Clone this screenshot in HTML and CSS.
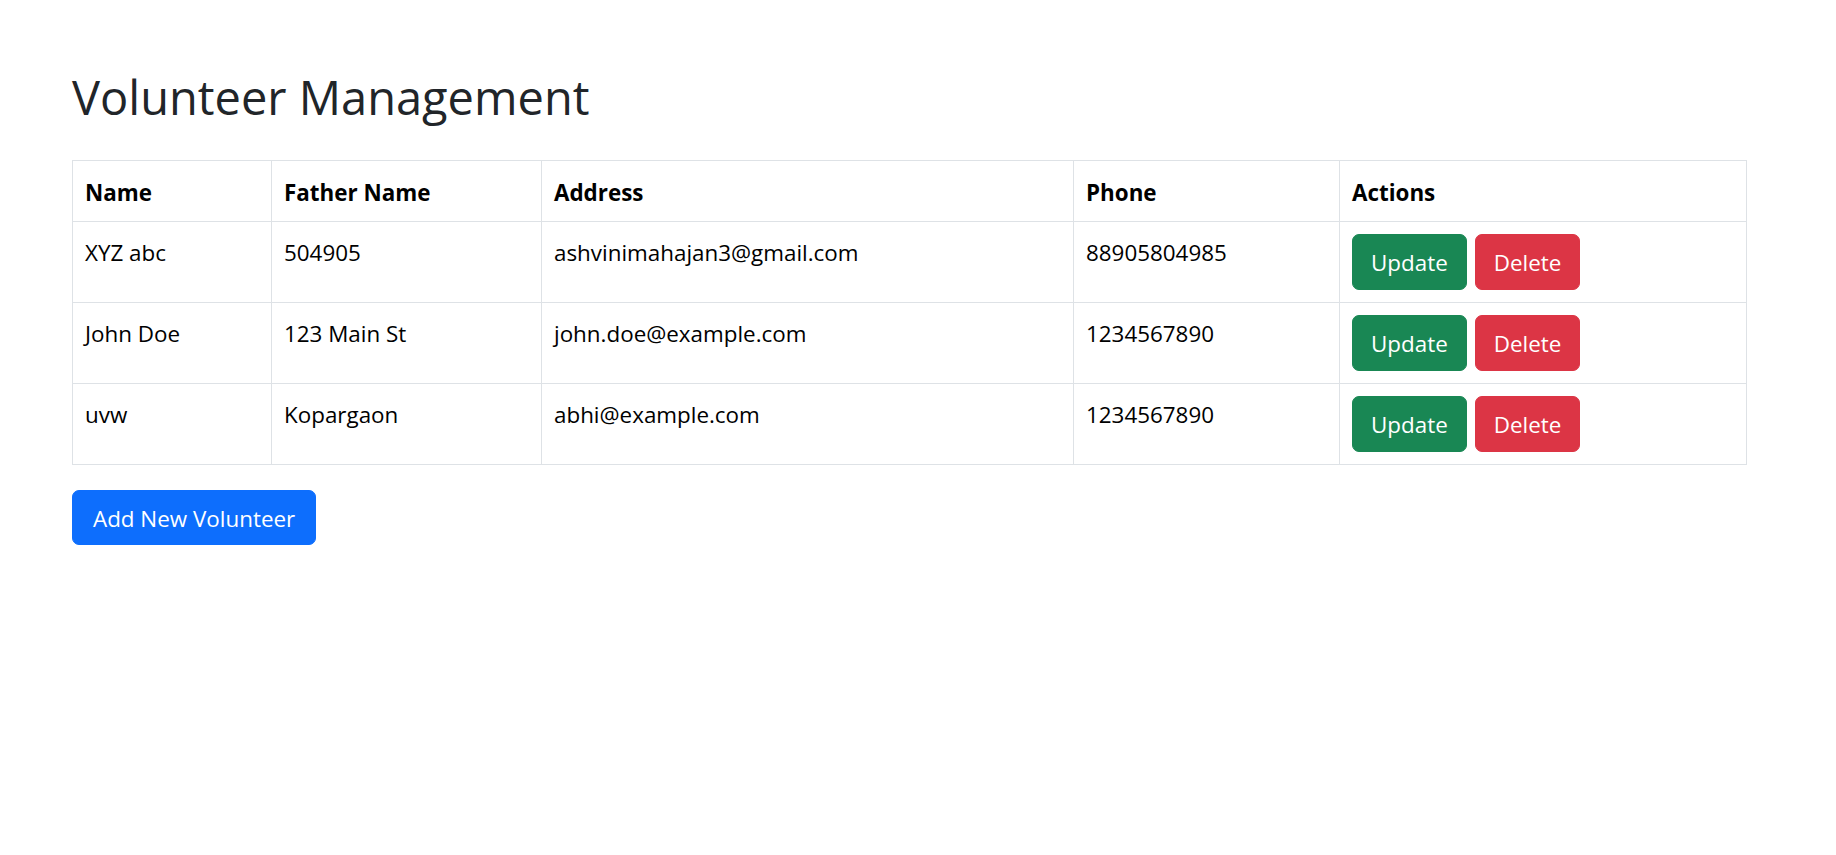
FILE: index.html
```html
<!DOCTYPE html>
<html lang="en">
<head>
<meta charset="utf-8">
<title>Volunteer Management</title>
<link rel="stylesheet" href="styles.css">
</head>
<body>
<main class="page">
  <h1 class="title">Volunteer Management</h1>
  <table class="grid">
    <colgroup>
      <col class="c-name">
      <col class="c-father">
      <col class="c-address">
      <col class="c-phone">
      <col class="c-actions">
    </colgroup>
    <thead>
      <tr>
        <th>Name</th>
        <th>Father Name</th>
        <th>Address</th>
        <th>Phone</th>
        <th>Actions</th>
      </tr>
    </thead>
    <tbody>
      <tr>
        <td>XYZ abc</td>
        <td>504905</td>
        <td>ashvinimahajan3@gmail.com</td>
        <td>88905804985</td>
        <td class="cell-actions"><div class="actions"><button class="btn btn-success">Update</button><button class="btn btn-danger">Delete</button></div></td>
      </tr>
      <tr>
        <td>John Doe</td>
        <td>123 Main St</td>
        <td>john.doe@example.com</td>
        <td>1234567890</td>
        <td class="cell-actions"><div class="actions"><button class="btn btn-success">Update</button><button class="btn btn-danger">Delete</button></div></td>
      </tr>
      <tr>
        <td>uvw</td>
        <td>Kopargaon</td>
        <td>abhi@example.com</td>
        <td>1234567890</td>
        <td class="cell-actions"><div class="actions"><button class="btn btn-success">Update</button><button class="btn btn-danger">Delete</button></div></td>
      </tr>
    </tbody>
  </table>
  <button class="btn btn-primary">Add New Volunteer</button>
</main>
</body>
</html>
```
FILE: styles.css
```css
html, body {
  margin: 0;
  padding: 0;
  background: #ffffff;
}

body {
  font-family: "Open Sans", "Noto Sans", sans-serif;
  font-size: 22.4px;
  color: #212529;
}

.page {
  padding: 70px 0 0 72px;
  width: 1674px;
}

.title {
  margin: 0 0 35px 0;
  font-size: 47px;
  font-weight: 500;
  line-height: 55px;
  color: #212529;
}

.grid {
  width: 1674px;
  border-collapse: collapse;
  table-layout: fixed;
  margin-bottom: 25px;
  color: #000000;
}

.c-name { width: 199px; }
.c-father { width: 270px; }
.c-address { width: 532px; }
.c-phone { width: 266px; }
.c-actions { width: 407px; }

.grid th,
.grid td {
  border: 1px solid #dee2e6;
  padding: 14px 12px 10px 12px;
  line-height: 34px;
  text-align: left;
  vertical-align: top;
}

.grid th {
  font-weight: 700;
  padding-top: 15px;
  padding-bottom: 11px;
}

.grid td.cell-actions {
  padding-top: 12px;
  padding-bottom: 12px;
}

.actions {
  display: flex;
  gap: 8px;
}

.btn {
  display: inline-block;
  font-family: inherit;
  font-size: 22.4px;
  line-height: 34px;
  padding: 11px 18px 9px 18px;
  border: 1px solid transparent;
  border-radius: 7px;
  color: #ffffff;
  cursor: pointer;
}

.btn-success {
  background: #198754;
  border-color: #198754;
}

.btn-danger {
  background: #dc3545;
  border-color: #dc3545;
}

.btn-primary {
  background: #0d6efd;
  border-color: #0d6efd;
  line-height: 33px;
  padding: 11px 20px 9px 20px;
}
```
